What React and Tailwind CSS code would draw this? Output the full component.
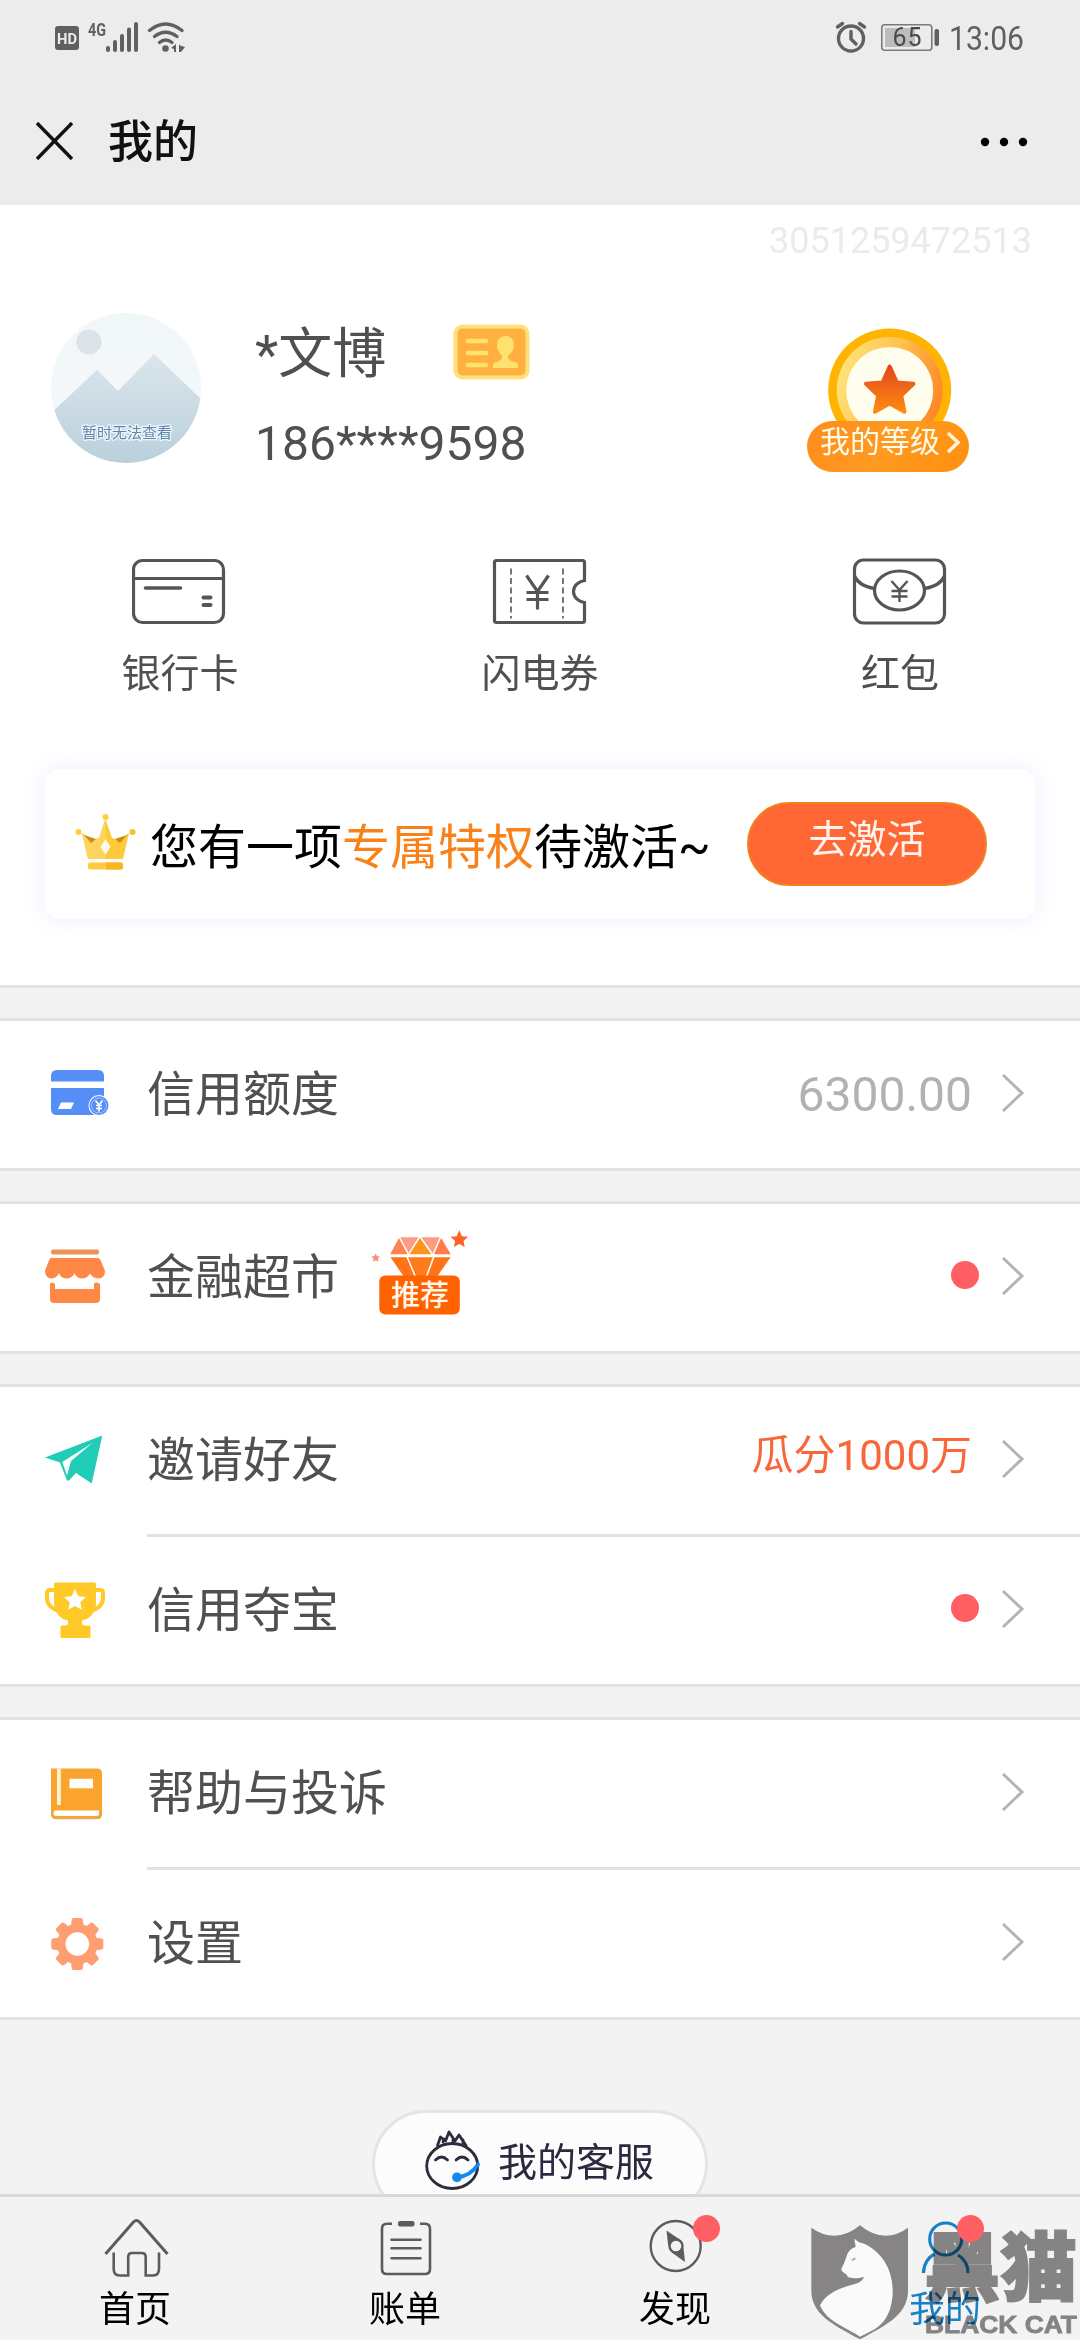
import React from 'react';

const STAR = 'M0,-10 L2.9,-3.6 L9.5,-3.1 L4.6,1.6 L5.9,8.1 L0,4.8 L-5.9,8.1 L-4.6,1.6 L-9.5,-3.1 L-2.9,-3.6 Z';

function StatusBar() {
  return (
    <div className="flex h-[74px] shrink-0 items-start pl-[55px] pr-[55px] pt-[10px] text-[#606060]">
      <svg width="130" height="50" viewBox="55 10 130 50" fill="#606060">
        <rect x="55" y="26" width="24" height="24" rx="3" />
        <text x="67" y="43.500" fontSize="15" fontWeight="700" textAnchor="middle" textLength="20" lengthAdjust="spacingAndGlyphs" fill="#ececec">HD</text>
        <text x="88" y="35.500" fontSize="19" fontWeight="700" textLength="18" lengthAdjust="spacingAndGlyphs">4G</text>
        <rect x="106" y="46" width="4" height="6" rx="2" />
        <rect x="113" y="40" width="4" height="12" rx="2" />
        <rect x="120" y="34" width="4" height="18" rx="2" />
        <rect x="127" y="27.500" width="4" height="24.500" rx="2" />
        <rect x="134" y="22" width="4" height="30" rx="2" />
        <g fill="none" stroke="#606060" strokeWidth="3.400" strokeLinecap="round">
          <path d="M149.500 30.500 Q165.500 17.500 182 30.500" />
          <path d="M154.500 36.500 Q165.500 28 177 36.500" />
          <path d="M159.500 42.500 Q165.500 37.500 172 42.500" />
        </g>
        <circle cx="165.500" cy="48.500" r="3.300" />
        <path d="M176 44v8h-2v-3l-3-1z M179 44l1 1.500 5 1.500-4 5h-2z" />
      </svg>
      <div className="ml-auto flex items-start">
        <svg width="106" height="50" viewBox="834 10 106 50" fill="none" stroke="#606060">
          <circle cx="851" cy="38.500" r="12.500" strokeWidth="3.400" />
          <path d="M851 31.500v7.500l5 5" strokeWidth="3.400" strokeLinecap="round" />
          <path d="M837.500 27l5-3.500 M864.500 27l-5-3.500" strokeWidth="3.400" strokeLinecap="round" />
          <rect x="885" y="28" width="30" height="19" fill="#bcbcbc" stroke="none" />
          <rect x="881.800" y="24.800" width="50" height="25.500" rx="3" strokeWidth="1.600" stroke="#7a7a7a" />
          <rect x="934.500" y="29" width="4.500" height="17" rx="2" fill="#606060" stroke="none" />
          <text x="907" y="46" fontSize="25" textAnchor="middle" textLength="29" fill="#4a4a4a" stroke="none">65</text>
        </svg>
        <svg className="ml-[9px]" width="76" height="50" viewBox="949 10 76 50">
          <text x="949" y="50" fontSize="34" textLength="75" lengthAdjust="spacingAndGlyphs" fill="#606060">13:06</text>
        </svg>
      </div>
    </div>
  );
}

function TitleBar() {
  return (
    <div className="flex h-[131px] shrink-0 items-center pl-[36px] pr-[52px] pt-[3px]">
      <svg width="37" height="38" viewBox="0 0 37 38" stroke="#111" strokeWidth="3.400">
        <path d="M1 1L36 37M36 1L1 37" />
      </svg>
      <h1 className="ml-[35px] mt-[4px] text-[45px] font-medium leading-[60px] text-[#111]">我的</h1>
      <svg className="ml-auto mt-[2px]" width="48" height="10" viewBox="0 0 48 10">
        <circle cx="5" cy="5" r="4.200" />
        <circle cx="24" cy="5" r="4.200" />
        <circle cx="43" cy="5" r="4.200" />
      </svg>
    </div>
  );
}

function Avatar() {
  return (
    <svg width="150" height="150" viewBox="0 0 150 150">
      <defs>
        <clipPath id="avatarClip"><circle cx="75" cy="75" r="75" /></clipPath>
        <linearGradient id="sky" x1="0" y1="0" x2="0" y2="1">
          <stop offset="0" stopColor="#f1f6f9" />
          <stop offset="1" stopColor="#f5f9fb" />
        </linearGradient>
        <linearGradient id="hill" x1="0" y1="0" x2="0" y2="1">
          <stop offset="0" stopColor="#dbe5ec" />
          <stop offset="1" stopColor="#b9d0dc" />
        </linearGradient>
      </defs>
      <g clipPath="url(#avatarClip)">
        <rect width="150" height="150" fill="url(#sky)" />
        <circle cx="38" cy="29" r="12.500" fill="#dbe2ea" />
        <path d="M0 100L46 57L67 78L103 41L150 86V150H0Z" fill="url(#hill)" />
      </g>
      <text x="76" y="125" fontSize="15" textAnchor="middle" fill="#5f86ad" stroke="#eef5fa" strokeWidth="2.500" paintOrder="stroke">暂时无法查看</text>
    </svg>
  );
}

function IdBadge() {
  return (
    <svg width="77" height="56" viewBox="0 0 77 56">
      <rect x="2.500" y="2.500" width="72" height="51" rx="7" fill="#ffb03f" stroke="#ffe07a" strokeWidth="4" />
      <path d="M15 17h18M15 29h18M15 41h18" stroke="#ffe26e" strokeWidth="4.500" strokeLinecap="round" />
      <path d="M53 12c-6 0-9 4-9 9 0 5 3 8 5 11 0 4-2 5-8 7-1 1-1 3-1 5h25c0-2 0-4-1-5-6-2-9-3-9-7 3-3 6-6 6-11 0-5-3-9-8-9z" fill="#ffe26e" />
    </svg>
  );
}

function LevelBadge() {
  return (
    <div className="relative h-[144px] w-[162px]">
      <svg width="162" height="144" viewBox="0 0 162 144">
        <defs>
          <linearGradient id="ring" x1="0" y1="0.300" x2="1" y2="0.600">
            <stop offset="0" stopColor="#ffe57c" />
            <stop offset="0.500" stopColor="#ffc04d" />
            <stop offset="1" stopColor="#ff8526" />
          </linearGradient>
          <linearGradient id="starFill" x1="0" y1="0" x2="0" y2="1">
            <stop offset="0" stopColor="#e0491c" />
            <stop offset="1" stopColor="#ff8a12" />
          </linearGradient>
          <linearGradient id="pill" x1="0" y1="0" x2="1" y2="0.300">
            <stop offset="0" stopColor="#ff8b1c" />
            <stop offset="0.600" stopColor="#ff9a22" />
            <stop offset="1" stopColor="#ff9212" />
          </linearGradient>
        </defs>
        <circle cx="82.700" cy="62" r="61.500" fill="#ffb302" />
        <circle cx="82.700" cy="62" r="53" fill="url(#ring)" />
        <circle cx="82.700" cy="62.500" r="43.500" fill="#fffdee" />
        <path d={STAR} transform="translate(82.700 63.500) scale(2.500)" fill="url(#starFill)" stroke="url(#starFill)" strokeWidth="1.600" strokeLinejoin="round" />
        <rect x="0" y="93" width="162" height="51" rx="25.500" fill="url(#pill)" />
        <path d="M141 105l10 9.500-10 9.500" fill="none" stroke="#fff3d8" strokeWidth="3.600" />
      </svg>
      <span className="absolute left-[13px] top-[92px] text-[30px] leading-[44px] text-[#fffbe9]">我的等级</span>
    </div>
  );
}

function BankCardIcon() {
  return (
    <svg width="96" height="68" viewBox="1.500 -0.500 96 68" fill="none" stroke="#555" strokeWidth="3.200">
      <rect x="3" y="3" width="90" height="62" rx="9" />
      <path d="M3 21h90" />
      <path d="M15 30.500h35" strokeWidth="3.600" strokeLinecap="round" />
      <path d="M73 40h7M73 47.500h7" strokeWidth="4" strokeLinecap="round" />
    </svg>
  );
}

function CouponIcon() {
  return (
    <svg width="96" height="68" viewBox="0.500 -0.500 96 68" fill="none" stroke="#555" strokeWidth="3.200">
      <path d="M5 3h86q2 0 2 2v18c-6 1-11 5-11 11s5 10 11 11v18q0 2-2 2H5q-2 0-2-2V5q0-2 2-2z" />
      <path d="M19.500 11v50M71.500 11v50" strokeWidth="1.600" strokeDasharray="6 3.500" />
      <path d="M35 18l11 16 11-16M46 34v18M35 35h22M35 42h22" />
    </svg>
  );
}

function RedPacketIcon() {
  return (
    <svg width="96" height="68" viewBox="0.500 0 96 68" fill="none" stroke="#555" strokeWidth="3.200">
      <rect x="3" y="3" width="90" height="63" rx="9" />
      <path d="M3 19c3 7 11 11 20 12.500M93 19c-3 7-11 11-20 12.500" />
      <ellipse cx="48" cy="33.500" rx="25" ry="19.500" />
      <path d="M40 24l8 9 8-9M48 33v12M40 34h16M40 39.500h16" strokeWidth="2.400" />
    </svg>
  );
}

function CrownIcon() {
  return (
    <svg width="61" height="58" viewBox="0 0 61 58">
      <path d="M30.500 6L37 25 44 27 54 20 48 46H13L7 20 17 27 24 25Z" fill="#ffc93c" />
      <path d="M30.500 6L24 25 17 27 7 20 13 46H30.500Z" fill="#ffd45c" />
      <path d="M9 22l12 4-5 4zM52 22l-12 4 5 4z" fill="#c98e1a" />
      <circle cx="30.500" cy="4" r="3" fill="#ffcf3e" />
      <circle cx="3.500" cy="19" r="3" fill="#ffcf3e" />
      <circle cx="57.500" cy="19" r="3" fill="#f9c02c" />
      <path d="M30.500 26l5 8-5 7.500-5-7.500z" fill="#fffbe8" />
      <rect x="13" y="49.500" width="35" height="7" rx="2" fill="#ffca3f" />
      <path d="M31 49.500h15q2 0 2 2v3q0 2-2 2H31z" fill="#f6b71e" />
    </svg>
  );
}

function CreditIcon() {
  return (
    <svg width="68" height="66" viewBox="0 0 68 66" fill="#568ef8">
      <path d="M15 8H56q6 0 6 6v5.500H9V14q0-6 6-6z" />
      <path d="M9 26H62V53H15q-6 0-6-6z" />
      <path d="M19 40.500h13l-3 6.500H16z" fill="#fff" />
      <circle cx="57" cy="43.500" r="10.500" fill="#fff" />
      <circle cx="57" cy="43.500" r="9.500" />
      <circle cx="57" cy="43.500" r="7.500" fill="none" stroke="#a6c5ff" strokeWidth="1" />
      <path d="M53.500 38.500l3.500 4.500 3.500-4.500M57 43v6.500M54 43.500h6M54 46.500h6" stroke="#fff" strokeWidth="1.700" fill="none" />
    </svg>
  );
}

function StoreIcon() {
  return (
    <svg width="66" height="66" viewBox="0 0 66 66" fill="#ff8846">
      <rect x="9" y="4.500" width="48" height="5" rx="2" fill="#ee9258" />
      <path d="M11 13H55q3 0 4 3l4 10q0 7-6 7.500-6 0-9-5-3 5-8 5t-7.500-5q-3 5-8 5t-7.500-5q-3 5-8 5-6-1-6-8l4-10q1-3 4-3z" />
      <path d="M8 39q0-1.500 2-1.500t3 1.500v5H52v-5q0-1.500 2.500-1.500T58 39v15q0 4-4 4H12q-4 0-4-4z" />
    </svg>
  );
}

function PlaneIcon() {
  return (
    <svg width="66" height="66" viewBox="0 0 66 66" fill="#22cdb8">
      <path d="M3 29.500L60.300 7.500 49.700 55.500 34 45 27 52.500H25L18 34.500Z" strokeLinejoin="round" />
      <path d="M20.300 34L50.700 14.800 29 33 25 47.500Z" fill="#fff" />
    </svg>
  );
}

function TrophyIcon() {
  return (
    <svg width="66" height="66" viewBox="0 0 66 66" fill="#ffc928">
      <path d="M12 6q0-1.500 1.500-1.500H52.500q1.500 0 1.500 1.500V25c0 9-6 16-14 17.500V45q0 2 2 2.500H47q1.500 0 1.500 1.500V60H18.500V49q0-1.500 1.500-1.500h4q2-.5 2-2.500v-2.500C18 41 12 34 12 25z" />
      <path d="M13 12H8q-3 0-3 3v5q0 9 12 13M53 12h5q3 0 3 3v5q0 9-12 13" fill="none" stroke="#ffc928" strokeWidth="4" />
      <path d={STAR} transform="translate(33 22.500) scale(1.150)" fill="#fff" />
    </svg>
  );
}

function BookIcon() {
  return (
    <svg width="66" height="66" viewBox="0 0 66 66">
      <path d="M9 7.500H55q5 0 5 5V53q0 5-5 5H13.500q-4.500 0-4.500-5z" fill="#fba42d" />
      <path d="M9.500 51q0 6.500 5 6.500H54q5.500 0 5.500-6" fill="none" stroke="#e5a94f" strokeWidth="1.500" />
      <rect x="15" y="7.500" width="3.800" height="36.500" fill="#fff3d8" />
      <rect x="27.500" y="17.800" width="23.500" height="9.500" fill="#fff" />
      <path d="M14 49.500H57V53q0 2-2.500 2H14q-2.500 0-2.500-2.700T14 49.500z" fill="#fff" />
    </svg>
  );
}

function GearIcon() {
  const teeth = [0, 45, 90, 135, 180, 225, 270, 315];
  return (
    <svg width="66" height="66" viewBox="0 0 66 66" fill="#ff9e70">
      {teeth.map((deg) => (
        <path key={deg} d="M-6.500 -17L-5.500 -24.500q.3-1.500 1.800-1.500h7.400q1.500 0 1.800 1.500L6.500 -17z" transform={`translate(35.300 33) rotate(${deg})`} />
      ))}
      <circle cx="35.300" cy="33" r="16" fill="none" stroke="#ff9e70" strokeWidth="8.500" />
    </svg>
  );
}

function RecommendBadge() {
  return (
    <svg width="98" height="85" viewBox="0 0 98 85">
      <g stroke="#fff" strokeWidth="1.400">
        <path d="M18 25L28 6.500 38 25z" fill="#ff8250" />
        <path d="M28 6.500H49L38 25z" fill="#fc9c84" />
        <path d="M49 6.500L62 25H37z" fill="#fd941f" />
        <path d="M49 6.500H70L62 25z" fill="#fc9c84" />
        <path d="M70 6.500L81 25H62z" fill="#ff7b4c" />
        <path d="M18 26.500H36L45 48H33z" fill="#ff7417" />
        <path d="M36 26.500H63L55 48H45z" fill="#ff7c1c" />
        <path d="M63 26.500H81L66 48H55z" fill="#ff7417" />
      </g>
      <rect x="8.300" y="45.500" width="80.500" height="39" rx="6" fill="#ff6200" />
      <text x="49" y="76" fontSize="29" fontWeight="500" textAnchor="middle" fill="#fff6ee">推荐</text>
      <path d={STAR} transform="translate(88.300 9.500) scale(0.920)" fill="#ff6328" />
      <path d={STAR} transform="translate(4.700 28) scale(0.460)" fill="#fc8c76" />
    </svg>
  );
}

function Chevron() {
  return (
    <svg width="24" height="40" viewBox="0 0 24 40" fill="none" stroke="#b4b4b4" strokeWidth="3">
      <path d="M2 2l19 18L2 38" />
    </svg>
  );
}

function RedDot() {
  return <span className="block size-[28px] rounded-full bg-[#ff5f62]" />;
}

const menu = [
  [{ icon: CreditIcon, label: '信用额度', value: '6300.00' }],
  [{ icon: StoreIcon, label: '金融超市', recommend: true, dot: true }],
  [
    { icon: PlaneIcon, label: '邀请好友', promo: '瓜分1000万' },
    { icon: TrophyIcon, label: '信用夺宝', dot: true },
  ],
  [
    { icon: BookIcon, label: '帮助与投诉' },
    { icon: GearIcon, label: '设置' },
  ],
];

function MenuRow({ item }) {
  const Icon = item.icon;
  return (
    <div className="flex h-[147px] items-center pl-[42px] pr-[55px]">
      <div className="w-[105px] shrink-0">
        <Icon />
      </div>
      <span className="text-[48px] leading-[60px] text-[#505050]">{item.label}</span>
      {item.recommend && <div className="ml-[32px] mt-[-10px]"><RecommendBadge /></div>}
      <div className="mb-[4px] ml-auto flex items-center gap-[29px]">
        {item.value && <span className="mt-[4px] text-[48px] leading-[60px] text-[#b2b2b2]">{item.value}</span>}
        {item.promo && <span className="mt-[-5px] text-[42px] leading-[60px] text-[#f8663a]">{item.promo}</span>}
        {item.dot && <div className="mr-[-7px] mt-[-2px]"><RedDot /></div>}
        <Chevron />
      </div>
    </div>
  );
}

function SupportButton() {
  return (
    <div className="mx-auto mt-[90px] flex h-[108px] w-[336px] items-center rounded-full border-[3px] border-[#e4e4e4] bg-[#fcfcfc] pl-[50px]">
      <svg className="mt-[-8px]" width="56" height="61" viewBox="0 0 56 61" fill="none" stroke="#2b2c3c" strokeWidth="2.800" strokeLinecap="round" strokeLinejoin="round">
        <path d="M12.500 15.500L15.500 7l5 4L24 2l6 9 4-6 7 10.500M19 9l-1 3M28 10v3M38 10v3" />
        <ellipse cx="27.200" cy="36" rx="25.500" ry="22.500" />
        <path d="M10.500 30q6-6 12 0M31 30q6-6 12 0" />
        <path d="M32 47.500q14-2 21-13" stroke="#1389f2" strokeWidth="4" />
        <circle cx="32" cy="47.300" r="3.500" fill="#1389f2" stroke="#1389f2" />
      </svg>
      <span className="ml-[17px] mt-[-2px] text-[39px] leading-[50px] text-[#2a2a3e]">我的客服</span>
    </div>
  );
}

function HomeIcon() {
  return (
    <svg width="70" height="62" viewBox="0 0 70 62" fill="none" stroke="#5c5c5c" strokeWidth="2.600">
      <path d="M5.500 37L33.500 5q3-3 6 0L67.500 37" strokeWidth="3" />
      <path d="M13.700 35.500V52q0 6.500 6 6.500h8.500V40q0-4 4-4h9.500q4 0 4 4v18.500H53q6 0 6-6.500V35.500" />
    </svg>
  );
}

function BillIcon() {
  return (
    <svg width="70" height="62" viewBox="0 0 70 62" fill="none" stroke="#5c5c5c" strokeWidth="2.600">
      <path d="M22 6.800h-5q-5 0-5 5V52q0 5 5 5H55q5 0 5-5V11.800q0-5-5-5h-5" />
      <path d="M21.500 22.800h29M21.500 31.200h29M21.500 41.200h29" strokeLinecap="round" />
      <rect x="28" y="4" width="16.500" height="5.500" rx="2" fill="#5c5c5c" stroke="none" />
    </svg>
  );
}

function CompassIcon() {
  return (
    <svg width="70" height="62" viewBox="0 0 70 62" fill="none" stroke="#5c5c5c" strokeWidth="2.400">
      <circle cx="35.700" cy="29" r="25" />
      <path d="M26.500 13.500L39 22 43.500 31 45 45 32.500 36 28 27Z" fill="#5c5c5c" stroke="none" />
      <circle cx="36" cy="29" r="6.500" fill="#f3f3f3" strokeWidth="2.400" />
    </svg>
  );
}

function UserIcon() {
  return (
    <svg width="70" height="62" viewBox="0 0 70 62" fill="none" stroke="#1681c4" strokeWidth="3.200">
      <circle cx="35.700" cy="22" r="16" />
      <path d="M13.500 56c0-9 5-16 11-19M58 56c0-9-5-15-10-18" />
    </svg>
  );
}

const tabs = [
  { label: '首页', icon: HomeIcon },
  { label: '账单', icon: BillIcon },
  { label: '发现', icon: CompassIcon, badge: 'left-[53px]' },
  { label: '我的', icon: UserIcon, badge: 'left-[47px]', active: true },
];

function TabBar() {
  return (
    <nav className="grid h-[146px] shrink-0 grid-cols-4 border-t-[3px] border-[#d9d9d9] bg-[#f3f3f3]">
      {tabs.map((tab) => {
        const Icon = tab.icon;
        return (
          <div key={tab.label} className="flex flex-col items-center pt-[20px]">
            <div className="relative">
              <Icon />
              {tab.badge && <span className={`${tab.badge} absolute top-[-2px] z-20 size-[27px] rounded-full bg-[#ff5f62]`} />}
            </div>
            <span className={`mt-[7px] text-[36px] leading-[48px] ${tab.active ? 'text-[#1681c4]' : 'text-black'}`}>
              {tab.label}
            </span>
          </div>
        );
      })}
    </nav>
  );
}

// brand stamp lying over the bottom right corner
function BlackCatStamp() {
  return (
    <>
      <svg className="absolute left-[811px] top-[2224px]" width="98" height="116" viewBox="153 132 294 348">
        <path d="M154 143Q228 195 300 136Q372 195 444 143V330C444 400 390 430 300 478C210 430 154 400 154 330Z" fill="#868484" />
        <path d="M283 176l14 11q12 2 22 7C372 222 400 275 398 340C395 400 372 432 340 450L300 470C255 440 200 425 180 376C200 335 250 322 285 312Q308 305 312 291C295 296 270 297 262 289C262 280 240 278 245 264C253 250 256 240 262 222Q270 206 287 201Z" fill="#fafafa" />
        <path d="M272 239q7-9 17-6-3 10-11 12zM279 234v10" fill="#868484" stroke="#fafafa" strokeWidth="3" />
      </svg>
      <svg className="absolute left-[920px] top-[2224px] mix-blend-multiply" width="160" height="116" viewBox="0 0 160 116" fill="#8c8a8a" stroke="#8c8a8a">
        <text x="4" y="71" fontSize="75" fontWeight="900" strokeWidth="2" textLength="153" lengthAdjust="spacingAndGlyphs">黑猫</text>
        <text x="5" y="109" fontSize="24" fontWeight="700" strokeWidth="0.800" fontFamily="Liberation Sans, sans-serif" textLength="152" lengthAdjust="spacingAndGlyphs">BLACK CAT</text>
      </svg>
    </>
  );
}

const services = [
  { label: '银行卡', icon: BankCardIcon },
  { label: '闪电券', icon: CouponIcon },
  { label: '红包', icon: RedPacketIcon },
];

export default function App() {
  return (
    <div className="relative flex h-[2340px] w-[1080px] flex-col overflow-hidden bg-[#f3f3f3] font-['Roboto','Noto_Sans_CJK_SC',sans-serif]">
      <header className="flex h-[205px] shrink-0 flex-col bg-[#ececec]">
        <StatusBar />
        <TitleBar />
      </header>

      <main className="min-h-0 flex-1 overflow-hidden">
        <section className="h-[783px] border-b-[3px] border-[#e2e2e2] bg-white">
          <div className="flex h-[70px] items-center justify-end pr-[48px] pt-[2px] text-[36px] text-[#ebebeb]">3051259472513</div>

          {/* profile */}
          <div className="flex h-[282px] items-start pl-[51px] pr-[111px] pt-[38px]">
            <Avatar />
            <div className="ml-[54px] text-[#505050]">
              <div className="flex items-start">
                <span className="pt-[3px] text-[54px] leading-[78px]">*文博</span>
                <div className="ml-[67px] mt-[11px]"><IdBadge /></div>
              </div>
              <div className="mt-[22px] text-[48px] leading-[56px]">186****9598</div>
            </div>
            <div className="ml-auto mt-[15px]"><LevelBadge /></div>
          </div>

          <div className="grid grid-cols-3">
            {services.map(({ label, icon: Icon }) => (
              <div key={label} className="flex flex-col items-center">
                <Icon />
                <span className="mt-[24px] text-[39px] leading-[50px] text-[#505050]">{label}</span>
              </div>
            ))}
          </div>

          {/* privilege card */}
          <div className="mx-[45px] mt-[70px] flex h-[150px] items-center rounded-[16px] bg-white pl-[30px] pr-[48px] shadow-[0_0_24px_4px_#f2f4fd]">
            <div className="mt-[-5px]"><CrownIcon /></div>
            <div className="ml-[14px] mt-[8px] whitespace-nowrap text-[48px] leading-[60px] text-black">
              您有一项<span className="text-[#f98119]">专属特权</span>待激活~
            </div>
            <button className="ml-auto h-[84px] w-[240px] rounded-full border-2 border-[#f3801f] bg-[#ff6835] pb-[8px] text-[39px] leading-none text-[#fff4ee]">去激活</button>
          </div>
        </section>

        {menu.map((group, i) => (
          <section key={i} className="mt-[30px] border-y-[3px] border-[#e2e2e2] bg-white">
            {group.map((item, j) => (
              <React.Fragment key={item.label}>
                {j > 0 && <div className="ml-[147px] h-[3px] bg-[#e2e2e2]" />}
                <MenuRow item={item} />
              </React.Fragment>
            ))}
          </section>
        ))}

        <SupportButton />
      </main>

      <TabBar />
      <BlackCatStamp />
    </div>
  );
}
